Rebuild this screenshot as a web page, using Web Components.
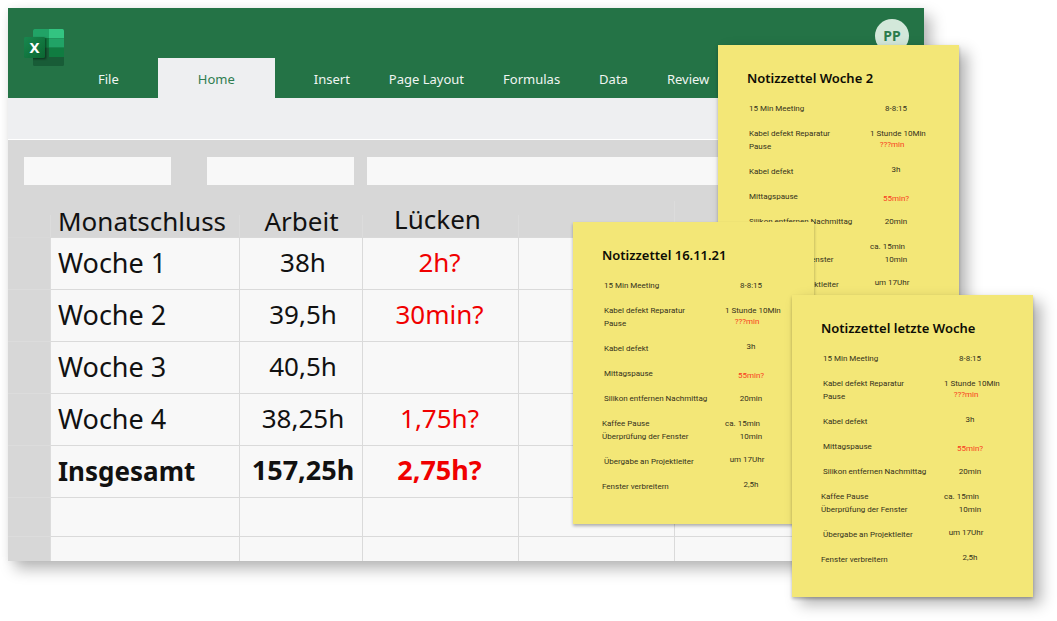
<!DOCTYPE html>
<html lang="de">
<head>
<meta charset="utf-8">
<title>Monatsabschluss</title>
<style>
  body { margin: 0; background: #fff; font-family: "Noto Sans", "Open Sans", sans-serif; color: #111; }
</style>
</head>
<body>
<desk-scene>
  <work-book>
    <app-header slot="header" user="PP">
      <ribbon-tab>File</ribbon-tab>
      <ribbon-tab active>Home</ribbon-tab>
      <ribbon-tab>Insert</ribbon-tab>
      <ribbon-tab>Page Layout</ribbon-tab>
      <ribbon-tab>Formulas</ribbon-tab>
      <ribbon-tab>Data</ribbon-tab>
      <ribbon-tab>Review</ribbon-tab>
    </app-header>
    <formula-bar slot="bar"></formula-bar>
    <month-sheet></month-sheet>
  </work-book>
  <sticky-note slot="notes" class="week" lifted>Notizzettel Woche 2</sticky-note>
  <sticky-note slot="notes" class="day">Notizzettel 16.11.21</sticky-note>
  <sticky-note slot="notes" class="last" lifted>Notizzettel letzte Woche</sticky-note>
</desk-scene>

<script>
function component(name, html, setup) {
  const template = document.createElement('template');
  template.innerHTML = html;
  customElements.define(name, class extends HTMLElement {
    constructor() {
      super();
      this.attachShadow({ mode: 'open' }).append(template.content.cloneNode(true));
    }
    connectedCallback() { if (setup) setup(this, this.shadowRoot); }
  });
}

component('desk-scene', `
  <style>
    :host { display: block; position: relative; padding: 8px 133px 60px 8px; }
    /* Notes lie loose on top of the workbook. */
    ::slotted(sticky-note) { position: absolute; }
    ::slotted(.week) { top: 45px; right: 98px; }
    ::slotted(.day) { top: 222px; right: 243px; }
    ::slotted(.last) { top: 295px; right: 24px; }
  </style>
  <slot></slot>
  <slot name="notes"></slot>`);

component('work-book', `
  <style>
    :host { display: block; background: #d7d7d7;
      box-shadow: 7px 8px 14px rgba(0,0,0,.28), 0 0 8px rgba(0,0,0,.05); }
    .ribbon { height: 41px; background: #eeeff1; border-bottom: 1px solid #fff; }
  </style>
  <slot name="header"></slot>
  <div class="ribbon"></div>
  <slot name="bar"></slot>
  <slot></slot>`);

component('app-header', `
  <style>
    :host { display: flex; justify-content: space-between; height: 90px; background: #247346; overflow: hidden; }
    app-logo { margin: 21px 0 0 16px; }
    nav { display: flex; flex: 1; align-items: flex-end; gap: 39px; margin-left: 34px; }
    .avatar { width: 34px; height: 34px; margin: 11px 15px 0 0; border: 0; padding: 0; border-radius: 50%;
      background: #d3e8da; color: #2c7c4d; font: 700 14px/34px "Noto Sans", sans-serif; }
  </style>
  <app-logo></app-logo>
  <nav><slot></slot></nav>
  <button class="avatar" type="button"></button>`,
  (host, root) => { root.querySelector('.avatar').textContent = host.getAttribute('user'); });

component('ribbon-tab', `
  <style>
    :host { display: block; }
    a { display: block; padding-top: 2px; font-size: 13px; line-height: 38px; color: #f0f5f2;
      text-decoration: none; white-space: nowrap; }
    :host([active]) a { padding: 2px 40px 0; background: #eeeff1; color: #2f7d50; }
  </style>
  <a href="#"><slot></slot></a>`);

component('app-logo', `
  <style>:host { display: block; width: 40px; height: 37px; } svg { display: block; overflow: visible; }</style>
  <svg width="40" height="37" viewBox="0 0 40 37" aria-label="Excel">
    <defs>
      <clipPath id="book"><rect x="9" width="31" height="37" rx="1.5"/></clipPath>
      <linearGradient id="face" x2="1" y2="1"><stop stop-color="#18884f"/><stop offset="1" stop-color="#0b6631"/></linearGradient>
      <filter id="soft" x="-30%" y="-30%" width="160%" height="160%"><feGaussianBlur stdDeviation="1"/></filter>
    </defs>
    <g clip-path="url(#book)">
      <rect x="9" width="31" height="37" fill="#185c37"/>
      <rect x="9" width="16" height="9.3" fill="#21a366"/>
      <rect x="25" width="15" height="9.3" fill="#33c481"/>
      <rect x="9" y="9.3" width="16" height="9.4" fill="#107c41"/>
      <rect x="25" y="9.3" width="15" height="9.4" fill="#21a366"/>
      <rect x="25" y="18.7" width="15" height="9.3" fill="#107c41"/>
      <rect x="2" y="9" width="20" height="21" fill="#000" opacity=".5" filter="url(#soft)"/>
    </g>
    <rect y="8" width="21" height="21" rx="1.5" fill="url(#face)"/>
    <text x="10.5" y="24" text-anchor="middle" font-family="Noto Sans, sans-serif" font-weight="700" font-size="15" fill="#fff">X</text>
  </svg>`);

component('formula-bar', `
  <style>
    :host { display: flex; padding: 17px 16px 15px; }
    input { box-sizing: border-box; width: 147px; height: 28px; border: 0; border-radius: 0; padding: 0 8px; background: #f8f8f8; }
    input + input { margin-left: 36px; }
    input.wide { flex: 1; width: auto; margin-left: 13px; }
  </style>
  <input aria-label="Name"><input aria-label="Format"><input class="wide" aria-label="Formel">`);

const blankRow = '<tr><td class="gutter"></td><td></td><td></td><td></td><td></td><td></td></tr>';
const sheetRow = ([label, work, gap], i, all) => `
  <tr class="${i === all.length - 1 ? 'total' : ''}"><td class="gutter"></td><th scope="row">${label}</th>
  <td class="work">${work}</td><td class="gap">${gap}</td><td></td><td></td></tr>`;

component('month-sheet', `
  <style>
    :host { display: block; }
    table { width: 100%; table-layout: fixed; border-collapse: separate; border-spacing: 0; font-size: 26px; line-height: 34px; }
    .c0 { width: 43px; } .c1 { width: 189px; } .c2 { width: 123px; } .c3, .c4 { width: 156px; }
    th, td { box-sizing: border-box; padding: 0; font-weight: 400; text-align: center; white-space: nowrap; }
    thead th, thead td { height: 38px; padding-top: 4px; line-height: 32px;
      border-bottom: 1px solid #d9d9d9;
      background: linear-gradient(#dcdcdc, #dcdcdc) right bottom / 1px 22px no-repeat; }
    thead .tall { background-size: 1px 36px; }
    thead .end { background: none; }
    thead th.gap { padding-bottom: 2px; padding-top: 2px; padding-right: 7px; }
    tbody th, tbody td { height: 52px; padding-bottom: 2px; background: #f8f8f8;
      border-right: 1px solid #dadada; border-bottom: 1px solid #dadada; }
    th.label, tbody th { text-align: left; padding-left: 7px; }
    tbody th { font-size: 27px; }
    tbody td { padding-bottom: 4px; }
    td.work { padding-left: 4px; }
    td.gap { color: #f00000; padding-right: 2px; }
    .total th, .total td { font-weight: 700; }
    .total th { font-size: 26px; }
    .total td { font-size: 27px; }
    tbody td:last-child { border-right: 0; }
    tbody td.gutter { background: #d7d7d7; border-color: #dcdcdc; }
    .blank td { height: 39px; padding: 0; }
    .cut td { height: 24px; padding: 0; border-bottom: 0; }
  </style>
  <table>
    <colgroup><col class="c0"><col class="c1"><col class="c2"><col class="c3"><col class="c4"><col></colgroup>
    <thead><tr><td></td><th scope="col" class="label">Monatschluss</th><th scope="col">Arbeit</th>
      <th scope="col" class="gap">Lücken</th><td class="tall"></td><td class="end"></td></tr></thead>
    <tbody>
      ${[
        ['Woche 1', '38h', '2h?'],
        ['Woche 2', '39,5h', '30min?'],
        ['Woche 3', '40,5h', ''],
        ['Woche 4', '38,25h', '1,75h?'],
        ['Insgesamt', '157,25h', '2,75h?'],
      ].map(sheetRow).join('')}
      ${blankRow.replace('<tr>', '<tr class="blank">')}
      ${blankRow.replace('<tr>', '<tr class="cut">')}
    </tbody>
  </table>`);

/* Each entry: task, time, classes. */
const entries = [
  ['15 Min Meeting', '8-8:15', ''],
  ['Kabel defekt Reparatur', '1 Stunde 10Min', 'start'],
  ['Pause', '???min', 'tight high red lead'],
  ['Kabel defekt', '3h', 'high'],
  ['Mittagspause', '55min?', 'low red'],
  ['Silikon entfernen Nachmittag', '20min', ''],
  ['Kaffee Pause', 'ca. 15min', 'flush start'],
  ['Überprüfung der Fenster', '10min', 'flush tight'],
  ['Übergabe an Projektleiter', 'um 17Uhr', 'high lead'],
  ['Fenster verbreitern', '2,5h', 'flush high'],
];

component('sticky-note', `
  <style>
    :host { display: block; box-sizing: border-box; width: 241px; padding: 24px 37px 31px 29px; background: #f3e777;
      box-shadow: 0 2px 3px rgba(0,0,0,.3); }
    :host([lifted]) { box-shadow: 0 2px 3px rgba(0,0,0,.25), 8px 7px 14px rgba(0,0,0,.3); }
    h2 { margin: 0 0 15px; font-size: 13px; line-height: 18px; font-weight: 600; color: #0d0d05; white-space: nowrap; }
    dl { margin: 0; font: 8px/13px Roboto, sans-serif; color: #33311c; }
    dl div { display: grid; grid-template-columns: 1fr 52px; align-items: center; height: 13px; margin-top: 12px; }
    dl div:first-child, dl .tight { margin-top: 0; }
    dt { padding-left: 2px; white-space: nowrap; }
    .flush dt { padding-left: 0; }
    dd { margin: 0; line-height: 9px; text-align: center; white-space: nowrap; }
    .start dd { text-align: left; }
    .lead dd { padding-right: 8px; }
    .high dd { align-self: start; }
    .low dd { align-self: end; }
    .red dd { color: #f8391c; }
  </style>
  <h2><slot></slot></h2>
  <dl>${entries.map(([task, time, cls]) => `<div class="${cls}"><dt>${task}</dt><dd>${time}</dd></div>`).join('')}</dl>`);
</script>
</body>
</html>
